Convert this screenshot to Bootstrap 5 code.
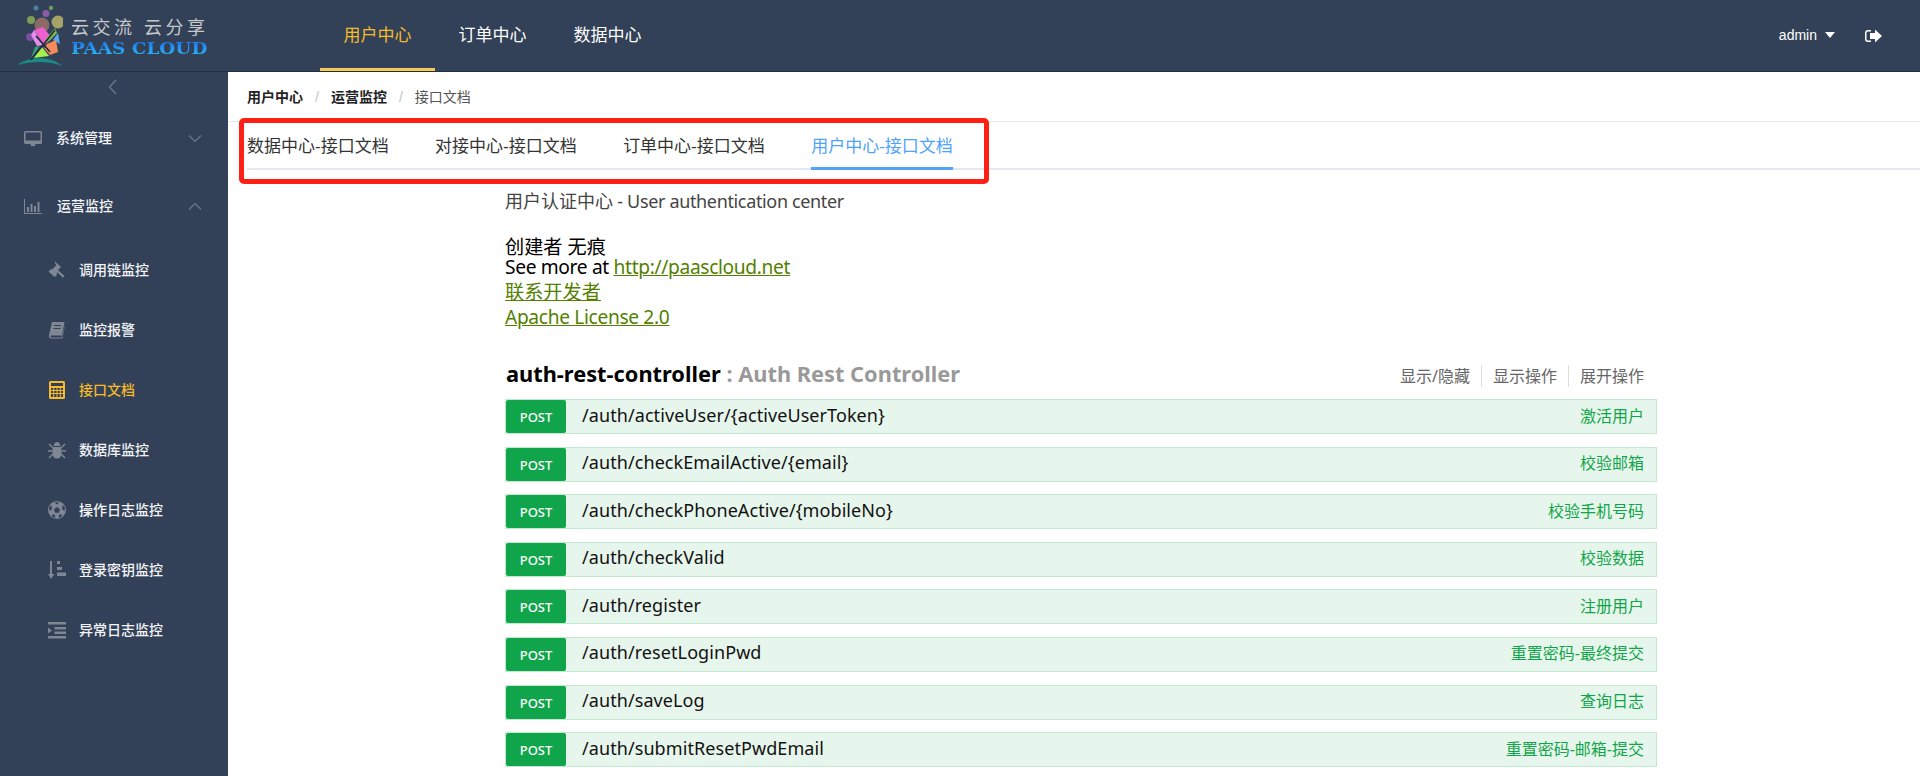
<!DOCTYPE html>
<html lang="zh-CN">
<head>
<meta charset="utf-8">
<title>接口文档</title>
<link href="https://cdn.jsdelivr.net/npm/bootstrap@5.3.0/dist/css/bootstrap.min.css" rel="stylesheet">
<style>
html,body{height:776px;overflow:hidden;background:#fff}
body{font-family:"Liberation Sans","Noto Sans CJK SC",sans-serif;color:#000}
.top-bar{height:72px;background:#324157;border-bottom:1px solid #232e40;padding:0}
.logo-box{width:320px;height:71px;align-items:flex-start}
.logo-mark{flex:none;display:block}
.logo-words{margin-left:8px;padding-top:17px;line-height:1}
.logo-cn{font-size:18px;color:#c5c8cd;letter-spacing:3.5px;white-space:pre;display:block;line-height:22px}
.logo-en{font-family:"DejaVu Serif","Liberation Serif",serif;font-weight:700;font-size:16px;line-height:19px;margin-top:0;display:block;width:122px;white-space:nowrap;transform:scaleX(1.15);transform-origin:left;background:linear-gradient(#1c6cf0,#2bc4f5);-webkit-background-clip:text;background-clip:text;color:transparent}
.top-link{font-size:17px;color:#fff;height:71px;line-height:71px;width:115px;text-align:center;padding:0;border-bottom:3px solid transparent}
.top-link.on,.top-link.on:hover{color:#f7ba2a;border-bottom-color:#f7ca5a}
.user-area{margin-left:auto;padding-right:38px;color:#fff;font-size:14px;gap:30px}
.caret-dn{display:inline-block;border:5px solid transparent;border-top:6px solid #fff;border-bottom:0;margin-left:8px;vertical-align:2px}
.body-row{height:704px}
.side-col{width:228px;flex:none;background:#324157;color:#f2f4f7;font-size:14px;font-weight:500}
.fold-mark{height:32px;padding-left:108px;padding-top:4px}
.side-head{height:68px;padding-left:24px;padding-right:26px;align-items:center}
.side-sub{height:60px;padding-left:48px;align-items:center}
.side-sub.on{color:#f7ba2a}
.ico{flex:none;width:18px;height:18px;fill:#7f8694}
.side-head .ico{margin-right:14px}
.side-sub .ico{margin-right:13px}
.side-sub.on .ico{fill:#f7ba2a}
.nudge-right{margin-left:1px}
.chev{margin-left:auto;width:14px;height:9px;fill:none;stroke:#6f7889;stroke-width:1.2}
.main-col{flex:1;min-width:0;position:relative}
.crumb-bar{height:50px;padding:17px 0 0 19px;border-bottom:1px solid #e9eaec}
.crumb-bar .breadcrumb{font-size:14px;line-height:16px;margin:0;--bs-breadcrumb-divider-color:#c0c4cc;--bs-breadcrumb-item-padding-x:12px}
.crumb-bar .breadcrumb-item{color:#555}
.crumb-bar .breadcrumb-item b{color:#222;font-weight:700}
.tab-row{margin-left:19px;height:48px;border-bottom:2px solid #e4e7ed;gap:46.4px}
.tab-item{font-size:17px;color:#333;height:48px;line-height:49px;margin-bottom:-2px;padding:0;border-bottom:3px solid transparent;white-space:nowrap}
.tab-item.on{color:#4fa3fb;border-bottom-color:#4fa3fb}
.red-note{position:absolute;left:11px;top:46px;width:750px;height:66px;border:5px solid #ff2015;border-radius:5px;pointer-events:none}
.doc-wrap{width:1152px;margin-left:277px;font-family:"Noto Sans","Noto Sans CJK SC",sans-serif}
.tight{letter-spacing:-.35px}
.doc-title{margin-top:19px;font-size:18px;line-height:24px;height:24px;color:#444}
.doc-author{margin-top:22px;font-size:19.2px;line-height:24px;height:19px}
.doc-line{font-size:19.2px;line-height:25px;height:25px}
.doc-line a{color:#547f00}
.ctl-head{margin-top:30px;height:40px;line-height:30px;padding-left:1px}
.ctl-name{font-size:21.8px;font-weight:700}
.ctl-name span{color:#999}
.ctl-links{font-size:16px;color:#666;padding-right:13px;line-height:20px;margin-top:7px}
.ctl-links span{padding:0 11px;border-left:1px solid #ddd}
.ctl-links span:first-child{border-left:0}
.ctl-links span:last-child{padding-right:0}
.post-row{height:35px;margin-bottom:12.6px;background:#e7f6ec;border:1px solid #c3e8d1;align-items:center;padding-right:12px}
.post-tag{width:60px;height:33px;line-height:35px;background:#10a54a;color:#fff;font-size:13px;font-weight:500;text-align:center;border-radius:2px;margin-right:16px;flex:none}
.post-path{font-size:18px;letter-spacing:.08px;color:#111;padding-bottom:3px}
.post-sum{margin-left:auto;font-size:16px;color:#10a54a;padding-bottom:2px}
</style>
</head>
<body>
<nav class="navbar top-bar d-flex flex-nowrap justify-content-start">
  <div class="logo-box d-flex">
    <svg class="logo-mark" width="63" height="71" viewBox="0 0 63 71" aria-hidden="true">
      <circle cx="36" cy="8" r="2.500" fill="#4f7fa8"/><circle cx="51" cy="8" r="2.200" fill="#6b9a55"/>
      <circle cx="46" cy="13.500" r="3.500" fill="#8a5aa8"/><circle cx="31" cy="20" r="4" fill="#7f9c54"/>
      <circle cx="58" cy="22" r="6.500" fill="#a5a267"/><circle cx="42" cy="25" r="7.500" fill="#8a6a66"/>
      <circle cx="30" cy="37" r="4" fill="#7a4fa0"/>
      <polygon points="34,30 43,27 52,38 44,45" fill="#f05fd0"/>
      <polygon points="34,30 31,35 37,46 43,45" fill="#e490ea"/>
      <polygon points="55,28 57,33 47,43 45,40" fill="#7cc04a"/>
      <polygon points="58,33 60,44 53,40" fill="#59a8f0"/>
      <polygon points="47,44 56,40 58,52 50,55 44,48" fill="#f58a5c"/>
      <polygon points="42,47 49,56 33,58 37,52" fill="#a5f04e"/>
      <polygon points="35,47 40,46 31,58" fill="#35a07e"/>
      <path d="M17 65C28 57 50 55 62 66C50 61 32 61 17 65Z" fill="#1a8c86"/>
      <path d="M31 60 55 30M36 36 50 52" stroke="#1d2c3e" stroke-width="1.600"/>
    </svg>
    <div class="logo-words">
      <span class="logo-cn">云交流 云分享</span>
      <span class="logo-en">PAAS CLOUD</span>
    </div>
  </div>
  <div class="nav">
    <a class="nav-link top-link on" href="#">用户中心</a>
    <a class="nav-link top-link" href="#">订单中心</a>
    <a class="nav-link top-link" href="#">数据中心</a>
  </div>
  <div class="user-area d-flex align-items-center">
    <span>admin<i class="caret-dn"></i></span>
    <svg width="17" height="14" viewBox="0 0 17 14" fill="#fff" aria-hidden="true"><path d="M6 1H3a3 3 0 0 0-3 3v6a3 3 0 0 0 3 3h3v-1.500H3A1.500 1.500 0 0 1 1.500 10V4A1.500 1.500 0 0 1 3 2.500h3z"/><path d="M10 .5 17 7l-7 6.500V10H5V4h5z"/></svg>
  </div>
</nav>
<div class="d-flex body-row">
  <aside class="side-col">
    <div class="fold-mark"><svg width="10" height="16" viewBox="0 0 10 16" fill="none" stroke="#6f7889" stroke-width="1.300" aria-hidden="true"><path d="M8 1 1.500 8 8 15"/></svg></div>
    <div class="side-head d-flex">
      <svg class="ico" viewBox="0 0 18 18"><path fill-rule="evenodd" d="M1.500 2h15A1.500 1.500 0 0 1 18 3.500v10a1.500 1.500 0 0 1-1.500 1.500H11l.5 2h-5l.5-2H1.500A1.500 1.500 0 0 1 0 13.500v-10A1.500 1.500 0 0 1 1.500 2zM1.500 3.500v8h15v-8z"/></svg>
      <span>系统管理</span>
      <svg class="chev" viewBox="0 0 14 9"><path d="M1 1.500 7 7.500 13 1.500"/></svg>
    </div>
    <div class="side-head d-flex">
      <svg class="ico" viewBox="0 0 18 18"><path d="M0 2h1v14h17v1H0z"/><path d="M3 10h2v5H3zM6.500 7h2v8h-2zM10 9h2v6h-2zM13.500 5h2v10h-2z"/></svg>
      <span class="nudge-right">运营监控</span>
      <svg class="chev" viewBox="0 0 14 9"><path d="M1 7.500 7 1.500 13 7.500"/></svg>
    </div>
    <div class="side-sub d-flex"><svg class="ico" viewBox="0 0 18 18"><path d="M7 .5 13 6l-3 3 1 1 5.500 5L15 16.800l-5.500-5.300-1 1L9 14l-2.500 2L.5 10.500 3 8l1 .5L8.500 4 7 2.500z"/></svg><span>调用链监控</span></div>
    <div class="side-sub d-flex"><svg class="ico" viewBox="0 0 18 18"><path fill-rule="evenodd" d="M4 1h12.500L14 14.500H3.500a1 1 0 0 0 0 2H14l3-13v1l-2.500 13H3A2.500 2.500 0 0 1 1 14.500zM6 4v1h7V4zm-.5 3v1h7V7z"/></svg><span>监控报警</span></div>
    <div class="side-sub d-flex on"><svg class="ico" viewBox="0 0 18 18"><path fill-rule="evenodd" d="M2.500 0h13A1.500 1.500 0 0 1 17 1.500v15a1.500 1.500 0 0 1-1.500 1.500h-13A1.500 1.500 0 0 1 1 16.500v-15A1.500 1.500 0 0 1 2.500 0zM3 2v3h12V2zM3 7v2h2.200V7zm3.200 0v2h2.300V7zm3.300 0v2h2.300V7zm3.300 0v2H15V7zM3 10v2h2.200v-2zm3.200 0v2h2.300v-2zm3.300 0v2h2.300v-2zm3.300 0v2H15v-2zM3 13v3h2.200v-3zm3.200 0v3h2.300v-3zm3.300 0v3h2.300v-3zm3.300 0v3H15v-3z"/></svg><span>接口文档</span></div>
    <div class="side-sub d-flex"><svg class="ico" viewBox="0 0 18 18"><path d="M5.500 5C6 2.500 7.500 1 9 1s3 1.500 3.500 4zM4.500 6h9v6.500C13.500 15.500 11.500 17.500 9 17.500s-4.500-2-4.500-5z"/><path d="M1 3l3.500 3.500M17 3l-3.500 3.500M0 10h4.500M18 10h-4.500M1 17l4-4M17 17l-4-4" stroke="#7f8694" stroke-width="1.500"/></svg><span>数据库监控</span></div>
    <div class="side-sub d-flex"><svg class="ico" viewBox="0 0 18 18"><circle cx="9" cy="9" r="9"/><g fill="#324157"><polygon points="9,6 12,8.200 10.900,11.700 7.100,11.700 6,8.200"/><polygon points="6.500,1.300 11.500,1.300 9,3.500"/><polygon points="1,6.500 3.300,4 4,8 1.500,10"/><polygon points="17,6.500 14.700,4 14,8 16.500,10"/><polygon points="3.500,14 6.500,13.300 7.500,16.700 5,16"/><polygon points="14.500,14 11.500,13.300 10.500,16.700 13,16"/></g></svg><span>操作日志监控</span></div>
    <div class="side-sub d-flex"><svg class="ico" viewBox="0 0 18 18"><path d="M2 0h2v13h2.500L3 18 0 13h2zM9 0h3v3H9zM9 6h5v3H9zM9 11.500h9V15H9z"/></svg><span>登录密钥监控</span></div>
    <div class="side-sub d-flex"><svg class="ico" viewBox="0 0 18 18"><path d="M0 1h18v2.500H0zM6.500 6H18v2.500H6.500zM6.500 10.500H18V13H6.500zM0 15h18v2.500H0zM0 6.500 4 9.500l-4 3z"/></svg><span>异常日志监控</span></div>
  </aside>
  <main class="main-col">
    <div class="crumb-bar">
      <ol class="breadcrumb">
        <li class="breadcrumb-item"><b>用户中心</b></li>
        <li class="breadcrumb-item"><b>运营监控</b></li>
        <li class="breadcrumb-item">接口文档</li>
      </ol>
    </div>
    <div class="tab-row d-flex">
      <a class="tab-item text-decoration-none" href="#">数据中心-接口文档</a>
      <a class="tab-item text-decoration-none" href="#">对接中心-接口文档</a>
      <a class="tab-item text-decoration-none" href="#">订单中心-接口文档</a>
      <a class="tab-item text-decoration-none on" href="#">用户中心-接口文档</a>
    </div>
    <div class="red-note"></div>
    <div class="doc-wrap">
      <div class="doc-title">用户认证中心<span class="tight"> - User authentication center</span></div>
      <div class="doc-author">创建者 无痕</div>
      <div class="doc-line tight">See more at <a href="#">http://paascloud.net</a></div>
      <div class="doc-line"><a href="#">联系开发者</a></div>
      <div class="doc-line tight"><a href="#">Apache License 2.0</a></div>
      <div class="ctl-head d-flex justify-content-between">
        <div class="ctl-name">auth-rest-controller <span>: Auth Rest Controller</span></div>
        <div class="ctl-links"><span>显示/隐藏</span><span>显示操作</span><span>展开操作</span></div>
      </div>
      <div class="post-row d-flex"><div class="post-tag">POST</div><div class="post-path">/auth/activeUser/{activeUserToken}</div><div class="post-sum">激活用户</div></div>
      <div class="post-row d-flex"><div class="post-tag">POST</div><div class="post-path">/auth/checkEmailActive/{email}</div><div class="post-sum">校验邮箱</div></div>
      <div class="post-row d-flex"><div class="post-tag">POST</div><div class="post-path">/auth/checkPhoneActive/{mobileNo}</div><div class="post-sum">校验手机号码</div></div>
      <div class="post-row d-flex"><div class="post-tag">POST</div><div class="post-path">/auth/checkValid</div><div class="post-sum">校验数据</div></div>
      <div class="post-row d-flex"><div class="post-tag">POST</div><div class="post-path">/auth/register</div><div class="post-sum">注册用户</div></div>
      <div class="post-row d-flex"><div class="post-tag">POST</div><div class="post-path">/auth/resetLoginPwd</div><div class="post-sum">重置密码-最终提交</div></div>
      <div class="post-row d-flex"><div class="post-tag">POST</div><div class="post-path">/auth/saveLog</div><div class="post-sum">查询日志</div></div>
      <div class="post-row d-flex"><div class="post-tag">POST</div><div class="post-path">/auth/submitResetPwdEmail</div><div class="post-sum">重置密码-邮箱-提交</div></div>
    </div>
  </main>
</div>
<script src="https://cdn.jsdelivr.net/npm/bootstrap@5.3.0/dist/js/bootstrap.bundle.min.js"></script>
</body>
</html>
